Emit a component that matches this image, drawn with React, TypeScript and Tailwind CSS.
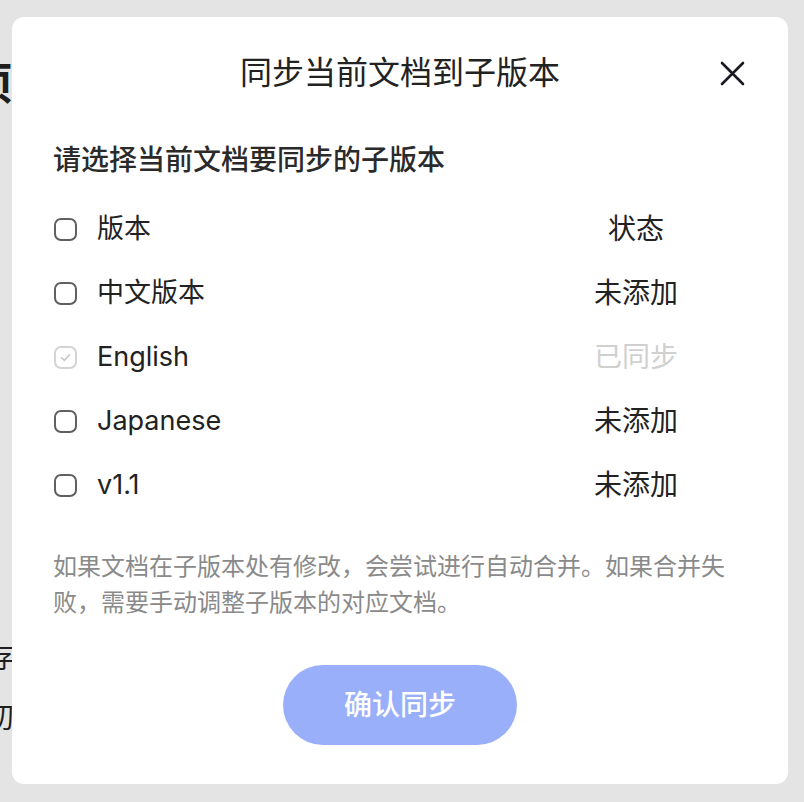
import React from "react";

const font = { fontFamily: "Inter, 'Noto Sans CJK SC', 'Noto Sans', sans-serif" };

function Box({ disabled }: { disabled?: boolean }) {
  if (disabled) {
    return (
      <div className="w-[23px] h-[23px] rounded-[7px] border-2 border-[#d4d4d4] flex items-center justify-center shrink-0">
        <svg width="13" height="13" viewBox="0 0 13 13" fill="none">
          <path d="M2.5 6.8 L5.3 9.4 L10.5 3.8" stroke="#c8c8c8" strokeWidth="1.6" strokeLinecap="round" strokeLinejoin="round" />
        </svg>
      </div>
    );
  }
  return <div className="w-[23px] h-[23px] rounded-[7px] border-[2.5px] border-[#606060] shrink-0" />;
}

const rows = [
  { name: "版本", status: "状态" },
  { name: "中文版本", status: "未添加" },
  { name: "English", status: "已同步", disabled: true },
  { name: "Japanese", status: "未添加" },
  { name: "v1.1", status: "未添加" },
];

export default function App() {
  return (
    <div className="relative w-[804px] h-[802px] bg-[#e4e4e4] overflow-hidden" style={font}>
      {/* background page */}
      <div className="flex flex-col text-[#1e1e1e]">
        <div className="ml-[-32px] mt-[58px] text-[44px] leading-[52px] font-bold">项</div>
        <div className="ml-[-14px] mt-[528px] text-[28px] leading-[40px]">存</div>
        <div className="ml-[-14px] mt-[20px] text-[28px] leading-[40px]">初</div>
      </div>

      {/* modal overlay */}
      <div className="absolute left-[12px] top-[17px] w-[776px] h-[767px] bg-white rounded-[12px] flex flex-col px-[41px] pt-[32px]">
        <div className="relative flex items-center justify-center h-[48px]">
          <div className="text-[32px] leading-[48px] text-[#222222]">同步当前文档到子版本</div>
          <svg className="absolute right-[2px] top-[12px]" width="25" height="25" viewBox="0 0 25 25" fill="none">
            <path d="M2 2 L23 23 M23 2 L2 23" stroke="#1a1a24" strokeWidth="2.6" strokeLinecap="round" />
          </svg>
        </div>

        <div className="mt-[43px] text-[28px] leading-[40px] font-medium text-[#2a2a2a]">请选择当前文档要同步的子版本</div>

        <div className="mt-[17px] flex flex-col">
          {rows.map((r) => (
            <div key={r.name} className="h-16 flex items-center">
              <div className="flex-1 flex items-center gap-[20px] pl-px">
                <Box disabled={r.disabled} />
                <span className="text-[27px] leading-[40px] text-[#222222]">{r.name}</span>
              </div>
              <div className={`w-[222px] text-center text-[28px] leading-[40px] ${r.disabled ? "text-[#d0d0d0]" : "text-[#222222]"}`}>
                {r.status}
              </div>
            </div>
          ))}
        </div>

        <div className="mt-[32px] text-[24px] leading-[36px] text-[#8a8a8a]">
          如果文档在子版本处有修改，会尝试进行自动合并。如果合并失败，需要手动调整子版本的对应文档。
        </div>

        <div className="mt-[44px] flex justify-center">
          <button className="w-[234px] h-[80px] rounded-full bg-[#99aff9] text-white text-[28px] font-medium">
            确认同步
          </button>
        </div>
      </div>
    </div>
  );
}
